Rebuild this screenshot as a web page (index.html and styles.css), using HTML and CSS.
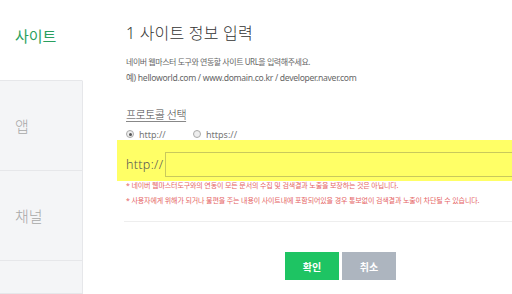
FILE: index.html
```html
<!DOCTYPE html>
<html lang="ko">
<head>
    <meta charset="UTF-8">
    <meta name="viewport" content="width=device-width, initial-scale=1.0">
    <title>사이트 정보 입력</title>
    <link rel="stylesheet" href="styles.css">
</head>
<body>
    <div class="layout">
        <ul class="side-menu">
            <li class="active">사이트</li>
            <li>앱</li>
            <li>채널</li>
            <li class="rest"></li>
        </ul>

        <div class="main">
            <h2 class="title">1 사이트 정보 입력</h2>
            <p class="desc ko">네이버 웹마스터 도구와 연동할 사이트 URL을 입력해주세요.</p>
            <p class="desc en">예) helloworld.com / www.domain.co.kr / developer.naver.com</p>

            <h3 class="label">프로토콜 선택</h3>
            <div class="radios">
                <label class="radio checked"><span class="dot"></span>http://</label>
                <label class="radio"><span class="dot"></span>https://</label>
            </div>

            <!-- 형광펜 표시 영역 -->
            <div class="url-row">
                <span class="prefix">http://</span>
                <input type="text" class="url-input">
            </div>

            <ul class="notes">
                <li>* 네이버 웹마스터도구와의 연동이 모든 문서의 수집 및 검색결과 노출을 보장하는 것은 아닙니다.</li>
                <li>* 사용자에게 위해가 되거나 불편을 주는 내용이 사이트내에 포함되어있을 경우 통보없이 검색결과 노출이 차단될 수 있습니다.</li>
            </ul>

            <div class="buttons">
                <button class="btn ok">확인</button>
                <button class="btn cancel">취소</button>
            </div>
        </div>
    </div>
</body>
</html>
```

FILE: styles.css
```css
html, body { margin: 0; padding: 0; overflow: hidden; }
body {
    font-family: "Noto Sans", "Noto Sans CJK KR", sans-serif;
    background: #fff;
    color: #333;
}
.layout {
    display: flex;
    width: 512px;
    height: 294px;
    overflow: hidden;
}

.side-menu {
    list-style: none;
    margin: 0;
    padding: 0;
    width: 83px;
    flex: none;
    display: flex;
    flex-direction: column;
}
.side-menu li {
    flex: none;
    height: 90px;
    box-sizing: border-box;
    padding-left: 15px;
    display: flex;
    align-items: center;
    font-size: 15px;
    font-weight: 300;
    color: #a8a8a8;
    background: #f4f5f7;
    border-right: 1px solid #e6e7ea;
    border-bottom: 1px solid #e6e7ea;
}
.side-menu li.active {
    height: 81px;
    padding-bottom: 10px;
    font-weight: normal;
    color: #2a9f5e;
    background: #fff;
    border-right-color: #fff;
}
.side-menu li.rest { flex: 1; height: auto; }

.main {
    flex: none;
    width: 429px;
    margin-left: 43px;
    display: flex;
    flex-direction: column;
}
.title {
    margin: 23px 0 0;
    font-size: 16px;
    line-height: 20px;
    font-weight: 300;
    letter-spacing: 0.2px;
    color: #333;
}
.desc {
    margin: 0;
    line-height: 17px;
    color: #666;
}
.desc.ko {
    margin-top: 10px;
    font-size: 8px;
    letter-spacing: -0.45px;
}
.desc.en {
    font-size: 8.6px;
    letter-spacing: -0.3px;
}
.label {
    margin: 20px 0 0;
    font-size: 11px;
    line-height: 16px;
    font-weight: 300;
    letter-spacing: -0.5px;
    color: #444;
    text-decoration: underline;
    text-underline-offset: 2px;
    text-decoration-color: #888;
}
.radios {
    display: flex;
    margin-top: 5px;
    height: 12px;
    align-items: center;
}
.radio {
    display: flex;
    align-items: center;
    font-size: 9px;
    color: #777;
    width: 67px;
}
.radio .dot {
    width: 6px;
    height: 6px;
    border: 1px solid #aaa;
    border-radius: 50%;
    background: #eee;
    margin-right: 5px;
    position: relative;
}
.radio.checked .dot::after {
    content: "";
    position: absolute;
    left: 1.5px;
    top: 1.5px;
    width: 3px;
    height: 3px;
    border-radius: 50%;
    background: #555;
}

.url-row {
    display: flex;
    align-items: center;
    margin-left: -9px;
    padding: 12px 0 4px 9px;
    background: #ffff66;
}
.prefix {
    font-size: 12.5px;
    font-weight: 300;
    letter-spacing: 0.3px;
    color: #555;
    width: 39px;
    flex: none;
}
.url-input {
    flex: 1;
    min-width: 0;
    height: 25px;
    box-sizing: border-box;
    margin: 0;
    border: 1px solid #c9c95c;
    background: #ffff66;
    outline: none;
}

.notes {
    list-style: none;
    margin: 0 0 0 -2px;
    padding: 0 0 15px 2px;
    border-bottom: 1px solid #eeeeee;
}
.notes li {
    font-size: 7px;
    line-height: 10px;
    letter-spacing: -0.12px;
    color: #e56464;
    white-space: nowrap;
}
.notes li + li { margin-top: 5px; }

.buttons {
    display: flex;
    justify-content: center;
    gap: 3px;
    margin-top: 30px;
}
.btn {
    width: 54px;
    height: 28px;
    border: none;
    font-family: inherit;
    font-size: 10px;
    font-weight: bold;
    color: #fff;
    cursor: pointer;
}
.btn.ok { background: #1ec463; }
.btn.cancel { background: #adb5bf; }
```
